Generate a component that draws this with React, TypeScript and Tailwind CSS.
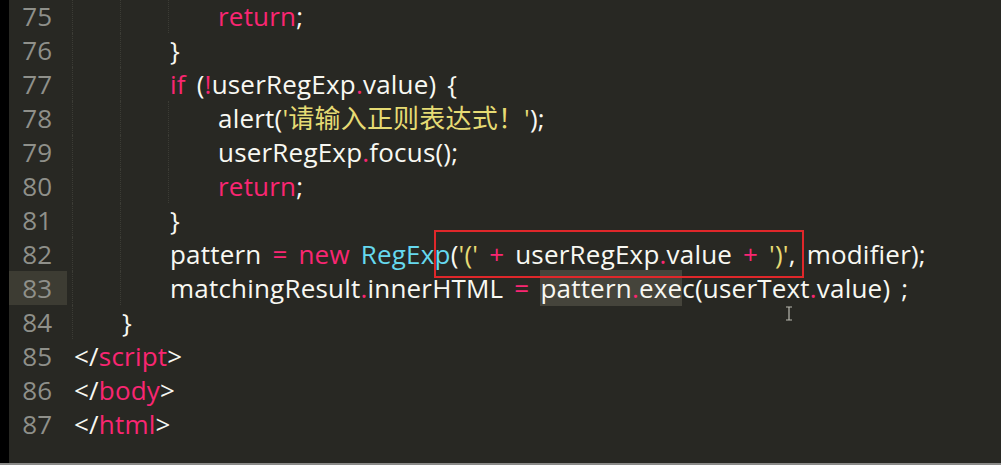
import React from "react";

const W = "text-[#f8f8f2]";
const P = "text-[#f92672]";
const B = "text-[#66d9ef]";
const Y = "text-[#e6db74]";

type Line = { n: number; level: number; toks: React.ReactNode };

const t = (s: string, c: string = W) => <span className={c}>{s}</span>;

const lines: Line[] = [
  { n: 75, level: 3, toks: <>{t("return", P)}{t(";")}</> },
  { n: 76, level: 2, toks: <>{t("}")}</> },
  {
    n: 77,
    level: 2,
    toks: (
      <>
        {t("if", P)}
        {t(" (")}
        {t("!", P)}
        {t("userRegExp")}
        {t(".", P)}
        {t("value) {")}
      </>
    ),
  },
  {
    n: 78,
    level: 3,
    toks: (
      <>
        {t("alert(")}
        {t("'请输入正则表达式！'", Y)}
        {t(");")}
      </>
    ),
  },
  {
    n: 79,
    level: 3,
    toks: (
      <>
        {t("userRegExp")}
        {t(".", P)}
        {t("focus();")}
      </>
    ),
  },
  { n: 80, level: 3, toks: <>{t("return", P)}{t(";")}</> },
  { n: 81, level: 2, toks: <>{t("}")}</> },
  {
    n: 82,
    level: 2,
    toks: (
      <>
        {t("pattern ")}
        {t("=", P)}
        {t(" ")}
        {t("new", P)}
        {t(" ")}
        {t("RegExp", B)}
        {t("(")}
        {t("'('", Y)}
        {t(" ")}
        {t("+", P)}
        {t(" userRegExp")}
        {t(".", P)}
        {t("value ")}
        {t("+", P)}
        {t(" ")}
        {t("')'", Y)}
        {t(", modifier);")}
      </>
    ),
  },
  {
    n: 83,
    level: 2,
    toks: (
      <>
        {t("matchingResult")}
        {t(".", P)}
        {t("innerHTML ")}
        {t("=", P)}
        {t(" ")}
        <span className="bg-[#45443b]">
          {t("pattern")}
          {t(".", P)}
          {t("exe")}
        </span>
        {t("c(userText")}
        {t(".", P)}
        {t("value) ;")}
      </>
    ),
  },
  { n: 84, level: 1, toks: <>{t("}")}</> },
  { n: 85, level: 0, toks: <>{t("</")}{t("script", P)}{t(">")}</> },
  { n: 86, level: 0, toks: <>{t("</")}{t("body", P)}{t(">")}</> },
  { n: 87, level: 0, toks: <>{t("</")}{t("html", P)}{t(">")}</> },
];

export default function App() {
  return (
    <div
      className="w-[1001px] h-[465px] bg-[#282823] flex flex-col overflow-hidden"
      style={{ fontFamily: '"Open Sans", "Noto Sans CJK SC", sans-serif' }}
    >
      <div className="flex flex-1 min-h-0">
        <div className="w-[9px] bg-black shrink-0" />
        <div className="relative flex-1 flex flex-col -mt-px text-[26px]">
          {lines.map((l) => (
            <div key={l.n} className="flex h-[34px] items-center leading-[34px]">
              <div
                className={`w-[58px] shrink-0 h-full pr-[15px] text-right text-[#8f908a] ${
                  l.n === 83 ? "bg-[#3d3c33]" : ""
                }`}
              >
                {l.n}
              </div>
              <div className="flex h-full items-center pl-[5px] whitespace-pre">
                {Array.from({ length: l.level }).map((_, i) => (
                  <span
                    key={i}
                    className="w-[48px] h-full border-l border-dotted border-[#3c3c35] shrink-0"
                  />
                ))}
                <span className="pl-[2px] tracking-[0.2px] [word-spacing:4px]">{l.toks}</span>
              </div>
            </div>
          ))}
          <div className="absolute left-[425px] top-[231px] w-[370px] h-[48px] border-2 border-[#e0272a]" />
          <svg
            className="absolute left-[776px] top-[307px]"
            width="8"
            height="15"
            viewBox="0 0 8 15"
          >
            <path d="M1 1h6M4 1v13M1 14h6" stroke="#b8b8b0" strokeWidth="1.2" fill="none" />
          </svg>
        </div>
      </div>
      <div className="h-[2px] bg-[#8a8a88] shrink-0" />
    </div>
  );
}
